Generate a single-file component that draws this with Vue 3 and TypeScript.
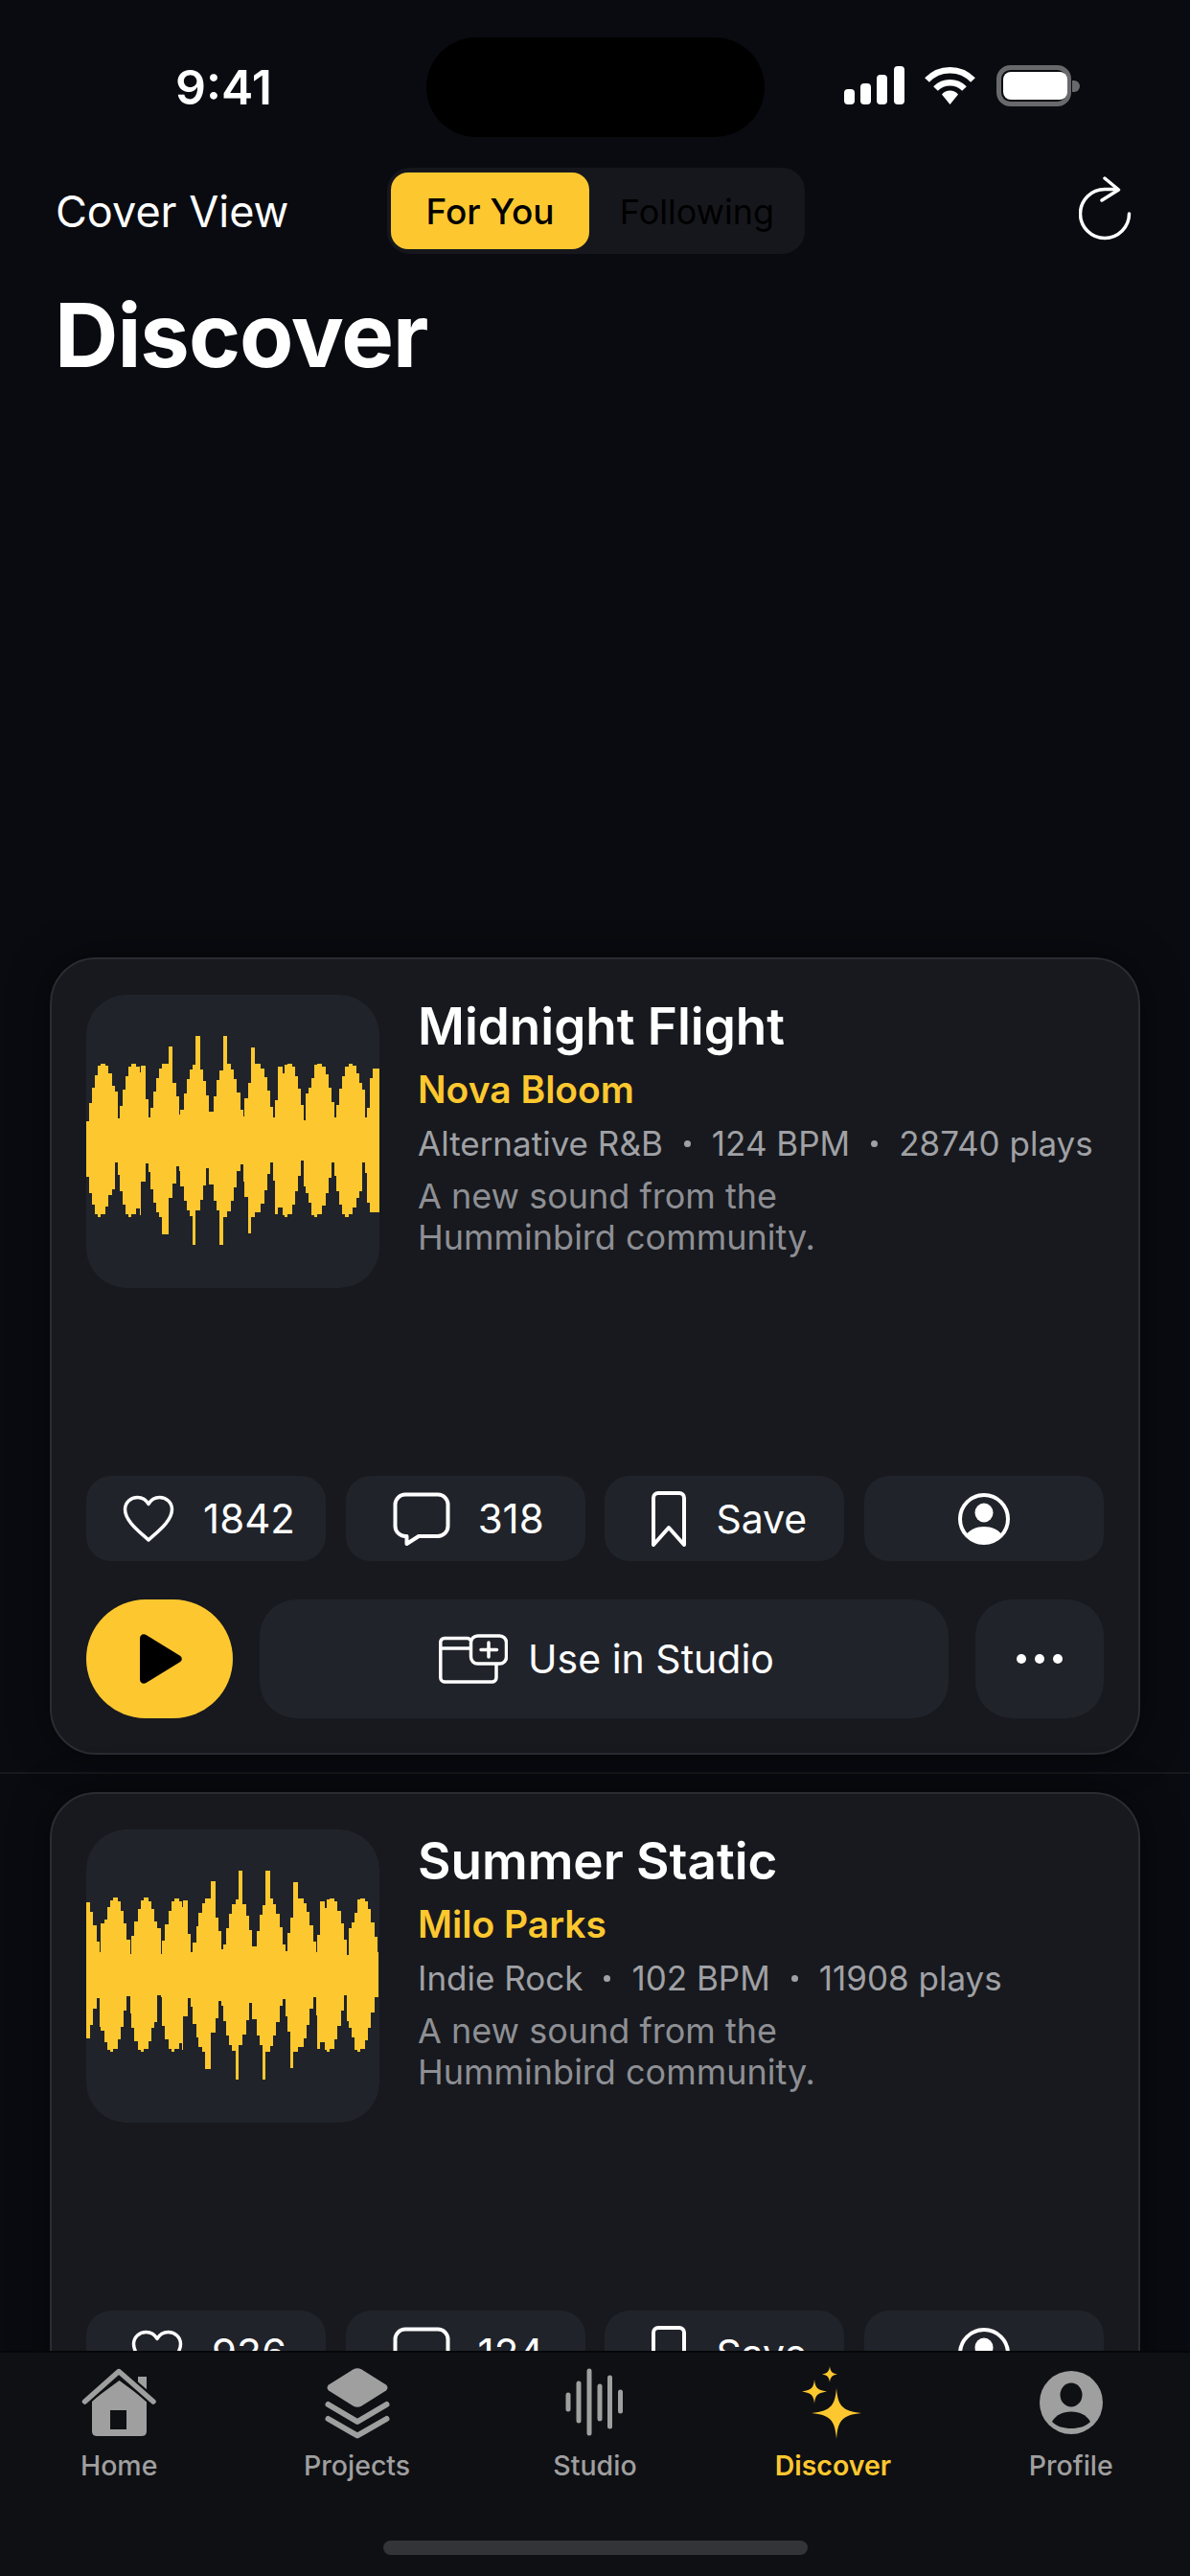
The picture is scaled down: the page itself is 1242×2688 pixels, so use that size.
<script setup lang="ts">
type Step = [number, number]

// Waveform outline: each step is [right edge, top of the band]; the lower half mirrors the upper.
const baseSteps: Step[] = [
  [40, 420], [48, 365], [58, 316], [67, 278], [76, 248], [90, 240], [100, 248], [110, 272], [120, 310], [129, 328],
  [134, 412], [143, 372], [153, 322], [162, 280], [171, 250], [186, 240], [196, 250], [200, 268], [215, 246], [224, 352],
  [230, 408], [240, 380], [248, 328], [258, 285], [267, 256], [286, 240], [300, 186], [310, 300], [320, 344], [324, 400],
  [334, 385], [343, 335], [352, 290], [362, 260], [371, 244], [385, 155], [396, 260], [405, 295], [414, 340], [428, 392],
  [438, 342], [447, 292], [457, 262], [471, 155], [481, 240], [490, 258], [500, 290], [510, 332], [519, 385], [524, 405],
  [534, 350], [543, 302], [557, 190], [575, 240], [585, 255], [595, 283], [605, 325], [614, 375], [619, 410], [628, 355],
  [643, 250], [648, 270], [658, 245], [672, 240], [681, 250], [691, 280], [700, 320], [710, 370], [715, 418], [724, 335],
  [733, 315], [743, 285], [752, 245], [767, 240], [777, 250], [786, 275], [796, 315], [805, 362], [810, 410], [819, 370],
  [829, 320], [838, 280], [848, 250], [862, 240], [872, 248], [881, 270], [891, 300], [900, 322], [905, 410], [915, 378],
  [924, 285], [933, 255], [946, 255],
]

const leadSteps: Step[] = [
  [43, 254], [52, 282], [62, 324], [71, 376], [76, 409], [86, 319], [95, 306], [105, 269], [114, 246], [129, 239],
  [138, 249], [148, 279], [157, 319], [167, 369], [171, 414], [181, 359], [190, 314], [200, 274], [209, 246], [224, 239],
  [233, 249], [243, 274], [252, 314], [262, 334], [267, 416],
]

const shiftedSteps: Step[] = [
  ...leadSteps,
  ...baseSteps.slice(10).filter(([x]) => x <= 812).map(([x, top]): Step => [x + 133, top]),
]

function wavePath(steps: Step[]): string {
  const mid = 480
  let x = 30
  let upper = `M30 ${mid}`
  let lower = ''
  for (const [end, top] of steps) {
    upper += `V${top}H${end}`
    lower = `H${x}V${2 * mid - top}` + lower
    x = end
  }
  return `${upper}V${mid}V${2 * mid - steps[steps.length - 1][1]}${lower}Z`
}

const tracks = [
  {
    title: 'Midnight Flight',
    artist: 'Nova Bloom',
    meta: ['Alternative R&B', '124 BPM', '28740 plays'],
    likes: 1842,
    comments: 318,
    wave: wavePath(baseSteps),
  },
  {
    title: 'Summer Static',
    artist: 'Milo Parks',
    meta: ['Indie Rock', '102 BPM', '11908 plays'],
    likes: 936,
    comments: 124,
    wave: wavePath(shiftedSteps),
  },
]

const studioBars = [
  { x: 3, y1: 28, y2: 43 },
  { x: 14, y1: 16, y2: 55 },
  { x: 25, y1: 3, y2: 68 },
  { x: 36, y1: 19, y2: 53 },
  { x: 46.5, y1: 10, y2: 61 },
  { x: 57.5, y1: 25, y2: 45 },
]
</script>

<template>
  <div class="screen">
    <div class="status">
      <span class="clock">9:41</span>
      <div class="island"></div>
      <div class="indicators">
        <svg class="signal" width="63" height="40" viewBox="0 0 63 40" fill="#fff">
          <rect x="0" y="24" width="11" height="16" rx="4" />
          <rect x="17" y="18" width="11" height="22" rx="4" />
          <rect x="34" y="9" width="11" height="31" rx="4" />
          <rect x="52" y="0" width="11" height="40" rx="4" />
        </svg>
        <svg class="wifi" width="55" height="40" viewBox="0 0 55 40" fill="none" stroke="#fff" stroke-width="6.5">
          <path d="M3.5 14.5A33 33 0 0 1 51.5 14.5" />
          <path d="M12.5 23.5A21 21 0 0 1 42.500 23.500" />
          <path d="M27.500 40L19 29.500A11 11 0 0 1 36 29.500Z" fill="#fff" stroke="none" />
        </svg>
        <svg class="battery" width="88" height="43" viewBox="0 0 88 43">
          <rect x="2.500" y="2.500" width="73" height="38" rx="12" fill="none" stroke="#69696c" stroke-width="5" />
          <rect x="7" y="7" width="67" height="29" rx="8" fill="#fff" />
          <path d="M79 16h2a6 6 0 0 1 0 12h-2z" fill="#69696c" />
        </svg>
      </div>
    </div>

    <header class="topbar">
      <span class="view-label">Cover View</span>
      <div class="segment">
        <span class="seg seg-on">For You</span>
        <span class="seg">Following</span>
      </div>
      <svg class="refresh" width="56" height="68" viewBox="0 0 56 68" fill="none" stroke="#fff" stroke-width="3.500" stroke-linecap="round" stroke-linejoin="round">
        <path d="M52.500 39A25.500 25.500 0 1 1 27 13.500H40" />
        <path d="M27 2L41.500 14L24 25" />
      </svg>
    </header>

    <h1 class="page-title">Discover</h1>

    <section class="feed">
      <div v-for="track in tracks" :key="track.title" class="feed-item">
        <article class="card">
          <div class="summary">
            <div class="cover">
              <svg class="wave" viewBox="30 26 915 915">
                <path :d="track.wave" fill="#fdc82f" />
              </svg>
            </div>
            <div class="info">
              <h2 class="title">{{ track.title }}</h2>
              <p class="artist">{{ track.artist }}</p>
              <p class="meta">
                <template v-for="(part, i) in track.meta" :key="part">
                  <i v-if="i > 0" class="dot"></i>
                  <span>{{ part }}</span>
                </template>
              </p>
              <p class="blurb">A new sound from the Humminbird community.</p>
            </div>
          </div>

          <div class="stats">
            <button class="tile nudge">
              <svg width="54" height="50" viewBox="0 0 54 50" fill="none" stroke="#fff" stroke-width="3.500" stroke-linejoin="round">
                <path d="M27 47C20 40 2.500 28 2.500 15C2.500 7.500 8.500 2.500 15.500 2.500C20.500 2.500 24.500 5 27 9.500C29.500 5 33.500 2.500 38.500 2.500C45.500 2.500 51.500 7.500 51.500 15C51.500 28 34 40 27 47Z" />
              </svg>
              <span class="tile-text gap-heart">{{ track.likes }}</span>
            </button>
            <button class="tile nudge">
              <svg width="60" height="56" viewBox="0 0 60 56" fill="none" stroke="#fff" stroke-width="4" stroke-linejoin="round">
                <path d="M13 2.500H47A10.500 10.500 0 0 1 57.500 13V35.500A10.500 10.500 0 0 1 47 46H27L14.500 54V46H13A10.500 10.500 0 0 1 2.500 35.500V13A10.500 10.500 0 0 1 13 2.500Z" />
              </svg>
              <span class="tile-text gap-comment">{{ track.comments }}</span>
            </button>
            <button class="tile nudge">
              <svg width="36" height="58" viewBox="0 0 36 58" fill="none" stroke="#fff" stroke-width="4" stroke-linejoin="round">
                <path d="M2 7A5 5 0 0 1 7 2H29A5 5 0 0 1 34 7V56L18 38L2 56Z" />
              </svg>
              <span class="tile-text gap-save">Save</span>
            </button>
            <button class="tile">
              <svg width="54" height="56" viewBox="0 0 54 56">
                <circle cx="27" cy="28" r="25" fill="none" stroke="#fff" stroke-width="4" />
                <ellipse cx="27" cy="21.500" rx="9.500" ry="10" fill="#fff" />
                <path d="M8 45C12 39 19 36 27 36C35 36 42 39 46 45A25 25 0 0 1 8 45Z" fill="#fff" />
              </svg>
            </button>
          </div>

          <div class="controls">
            <button class="play">
              <svg width="44" height="52" viewBox="0 0 44 52" fill="#000">
                <path d="M0 4.500C0 1 3.500 -1 6.500 1L41.500 22.500C44.500 24.300 44.500 27.700 41.500 29.500L6.500 51C3.500 53 0 51 0 47.500Z" />
              </svg>
            </button>
            <button class="studio">
              <svg width="72" height="52" viewBox="0 0 72 52" fill="none" stroke="#fff" stroke-width="3.500" stroke-linejoin="round" stroke-linecap="round">
                <path d="M33 6.500A3.800 3.800 0 0 0 29.500 4.500H6A4.500 4.500 0 0 0 1.800 8V45.500A4.500 4.500 0 0 0 6 50H56A4.500 4.500 0 0 0 60 45.500V30" />
                <path d="M2 15H33" />
                <rect x="33.500" y="2" width="37" height="29" rx="7" fill="#20232a" />
                <path d="M52 9V24M44 16.500H60.500" />
              </svg>
              <span>Use in Studio</span>
            </button>
            <button class="more">
              <i></i><i></i><i></i>
            </button>
          </div>
        </article>
      </div>
    </section>

    <nav class="tabbar">
      <div class="tab">
        <svg class="tab-icon" width="78" height="72" viewBox="0 0 78 72">
          <rect x="59" y="9" width="9" height="18" fill="#9f9f9f" />
          <path d="M11 66V34L39.500 13L68 34V66Q68 71 63 71H16Q11 71 11 66Z" fill="#9f9f9f" />
          <path d="M3.500 35L39 3.500L75 35" fill="none" stroke="#0f1014" stroke-width="10" stroke-linecap="round" stroke-linejoin="round" />
          <path d="M3.500 35L39 3.500L75 35" fill="none" stroke="#9f9f9f" stroke-width="5.500" stroke-linecap="round" stroke-linejoin="round" />
          <rect x="30" y="44" width="17" height="20" fill="#0f1014" />
        </svg>
        <span>Home</span>
      </div>
      <div class="tab">
        <svg class="tab-icon" width="68" height="72" viewBox="0 0 68 72">
          <path d="M29.500 1.500Q34 -1 38.500 1.500L64 17.500Q67 20.500 64 23.500L38.500 39.500Q34 42 29.500 39.500L4 23.500Q1 20.500 4 17.500Z" fill="#9f9f9f" />
          <path d="M3.500 38L34 56L64.500 38M3.500 53L34 70.500L64.500 53" fill="none" stroke="#9f9f9f" stroke-width="6" stroke-linecap="round" stroke-linejoin="round" />
        </svg>
        <span>Projects</span>
      </div>
      <div class="tab">
        <svg class="tab-icon" width="61" height="72" viewBox="0 0 61 72" stroke="#9f9f9f" stroke-width="5" stroke-linecap="round">
          <line v-for="bar in studioBars" :key="bar.x" :x1="bar.x" :x2="bar.x" :y1="bar.y1" :y2="bar.y2" />
        </svg>
        <span>Studio</span>
      </div>
      <div class="tab tab-on">
        <svg class="tab-icon" width="64" height="76" viewBox="0 0 64 76" fill="#fdc82f">
          <path d="M36 23C37.500 40 41 47 62 49C41 51 37.500 58 36 76C34.500 58 31 51 10 49C31 47 34.500 40 36 23Z" />
          <path d="M13 14C13.800 22 15.500 25 26 26.500C15.500 28 13.800 31 13 39C12.200 31 10.500 28 0 26.500C10.500 25 12.200 22 13 14Z" />
          <path d="M29 0C29.500 5 31 7.500 37 8.500C31 9.500 29.500 12 29 17C28.500 12 27 9.500 21 8.500C27 7.500 28.500 5 29 0Z" />
        </svg>
        <span>Discover</span>
      </div>
      <div class="tab">
        <svg class="tab-icon" width="68" height="72" viewBox="0 0 68 72">
          <circle cx="34" cy="36" r="33" fill="#9f9f9f" />
          <ellipse cx="34" cy="28" rx="11.500" ry="12.500" fill="#0f1014" />
          <path d="M14 56C18 49 25 45.500 34 45.500C43 45.500 50 49 54 56C49 61 42 63 34 63C26 63 19 61 14 56Z" fill="#0f1014" />
        </svg>
        <span>Profile</span>
      </div>
      <div class="home-bar"></div>
    </nav>
  </div>
</template>

<style>
html,
body {
  margin: 0;
  background: #090b10;
}
</style>

<style scoped>
.screen {
  position: relative;
  width: 1242px;
  height: 2688px;
  overflow: hidden;
  background: #090b10;
  color: #fff;
  font-family: Inter, "Liberation Sans", sans-serif;
}

.status {
  display: grid;
  grid-template-columns: 445px 353px 1fr;
  height: 175px;
  box-sizing: border-box;
  padding-top: 39px;
}
.clock {
  justify-self: center;
  margin-left: 22px;
  margin-top: 22px;
  font-size: 50px;
  line-height: 60px;
  font-weight: 600;
}
.island {
  height: 104px;
  border-radius: 52px;
  background: #000;
}
.indicators {
  display: flex;
  align-items: flex-start;
  gap: 20px;
  padding: 30px 0 0 83px;
}
.battery {
  margin: -1px 0 0 1px;
}

.topbar {
  position: relative;
  display: flex;
  align-items: center;
  height: 90px;
  padding: 0 60px 0 58px;
}
.view-label {
  width: 346px;
  margin-top: 2px;
  font-size: 45px;
  line-height: 56px;
}
.segment {
  display: flex;
  align-items: center;
  width: 436px;
  height: 90px;
  box-sizing: border-box;
  padding: 0 4px;
  border-radius: 24px;
  background: #16171c;
}
.seg {
  flex: 1;
  padding-top: 2px;
  padding-left: 4px;
  text-align: center;
  font-size: 36px;
  font-weight: 400;
  color: #000;
}
.seg-on {
  flex: 0 0 207px;
  height: 80px;
  padding: 0;
  line-height: 82px;
  border-radius: 18px;
  background: #fdc82f;
  font-size: 37px;
  font-weight: 500;
}
.refresh {
  margin-left: auto;
  margin-top: -4px;
}

.page-title {
  margin: 30px 0 0 57px;
  font-size: 92px;
  line-height: 110px;
  font-weight: 700;
  letter-spacing: -1px;
}

.feed {
  height: 1494px;
  box-sizing: border-box;
  margin-top: 554px;
  padding-top: 40px;
  overflow: hidden;
}
.feed-item {
  padding: 0 52px 18px;
  border-bottom: 2px solid #18191d;
  margin-bottom: 19px;
}
.card {
  display: flex;
  flex-direction: column;
  height: 832px;
  box-sizing: border-box;
  padding: 37px 36px 36px;
  border: 2px solid #2b2c31;
  border-radius: 48px;
  background: #17191e;
  box-shadow: 0 0 40px rgba(0, 0, 0, 0.5);
}
.summary {
  display: flex;
  gap: 40px;
}
.cover {
  flex: 0 0 306px;
  height: 306px;
  border-radius: 42px;
  background: #20232a;
  overflow: hidden;
}
.wave {
  display: block;
  width: 306px;
  height: 306px;
  shape-rendering: crispEdges;
}
.info {
  min-width: 0;
}
.title {
  margin: 0;
  font-size: 53px;
  line-height: 66px;
  font-weight: 600;
  white-space: nowrap;
}
.artist {
  margin: 9px 0 0;
  font-size: 39px;
  line-height: 48px;
  font-weight: 600;
  color: #fdc82f;
}
.meta {
  display: flex;
  align-items: center;
  margin: 11px 0 0;
  font-size: 35px;
  line-height: 42px;
  font-weight: 400;
  color: #a0a1a5;
  white-space: nowrap;
}
.dot {
  width: 7px;
  height: 7px;
  margin: 0 22px;
  border-radius: 50%;
  background: #a0a1a5;
}
.blurb {
  max-width: 540px;
  margin: 13px 0 0;
  font-size: 36px;
  line-height: 43px;
  color: #8e8f94;
}

.stats {
  display: grid;
  grid-template-columns: repeat(4, 250px);
  justify-content: space-between;
  margin-top: auto;
}
.tile {
  display: flex;
  align-items: center;
  justify-content: center;
  height: 89px;
  padding: 0;
  border: 0;
  border-radius: 26px;
  background: #20232a;
  color: #fff;
  font: inherit;
}
.nudge {
  padding-left: 6px;
}
.tile-text {
  font-size: 42px;
  line-height: 50px;
}
.gap-heart {
  margin-left: 30px;
}
.gap-comment {
  margin-left: 29px;
}
.gap-save {
  margin-left: 31px;
  font-size: 41px;
}
.tile:nth-child(3) {
  padding-left: 10px;
}

.controls {
  display: flex;
  gap: 28px;
  height: 124px;
  margin-top: 40px;
}
.play,
.studio,
.more {
  display: flex;
  align-items: center;
  justify-content: center;
  padding: 0;
  border: 0;
  background: #20232a;
  color: #fff;
  font: inherit;
}
.play {
  flex: 0 0 153px;
  padding-left: 2px;
  border-radius: 62px;
  background: #fdc82f;
}
.studio {
  flex: 1;
  gap: 21px;
  padding-left: 5px;
  border-radius: 38px;
  font-size: 41px;
}
.more {
  flex: 0 0 134px;
  gap: 9px;
  border-radius: 38px;
}
.more i {
  width: 10px;
  height: 10px;
  border-radius: 50%;
  background: #fff;
}

.tabbar {
  position: absolute;
  left: 0;
  right: 0;
  bottom: 0;
  display: grid;
  grid-template-columns: repeat(5, 1fr);
  align-items: start;
  height: 235px;
  box-sizing: border-box;
  border-top: 2px solid #050608;
  background: #0f1014;
}
.tab {
  display: flex;
  flex-direction: column;
  align-items: center;
  font-size: 28.5px;
  line-height: 34px;
  font-weight: 500;
  color: #9f9f9f;
}
.tab-icon {
  height: 76px;
  margin-top: 14px;
  margin-bottom: 11px;
}
.tab-on {
  color: #fdc82f;
  font-weight: 600;
}
.home-bar {
  position: absolute;
  left: 400px;
  bottom: 22px;
  width: 443px;
  height: 15px;
  border-radius: 8px;
  background: #333437;
}
</style>
